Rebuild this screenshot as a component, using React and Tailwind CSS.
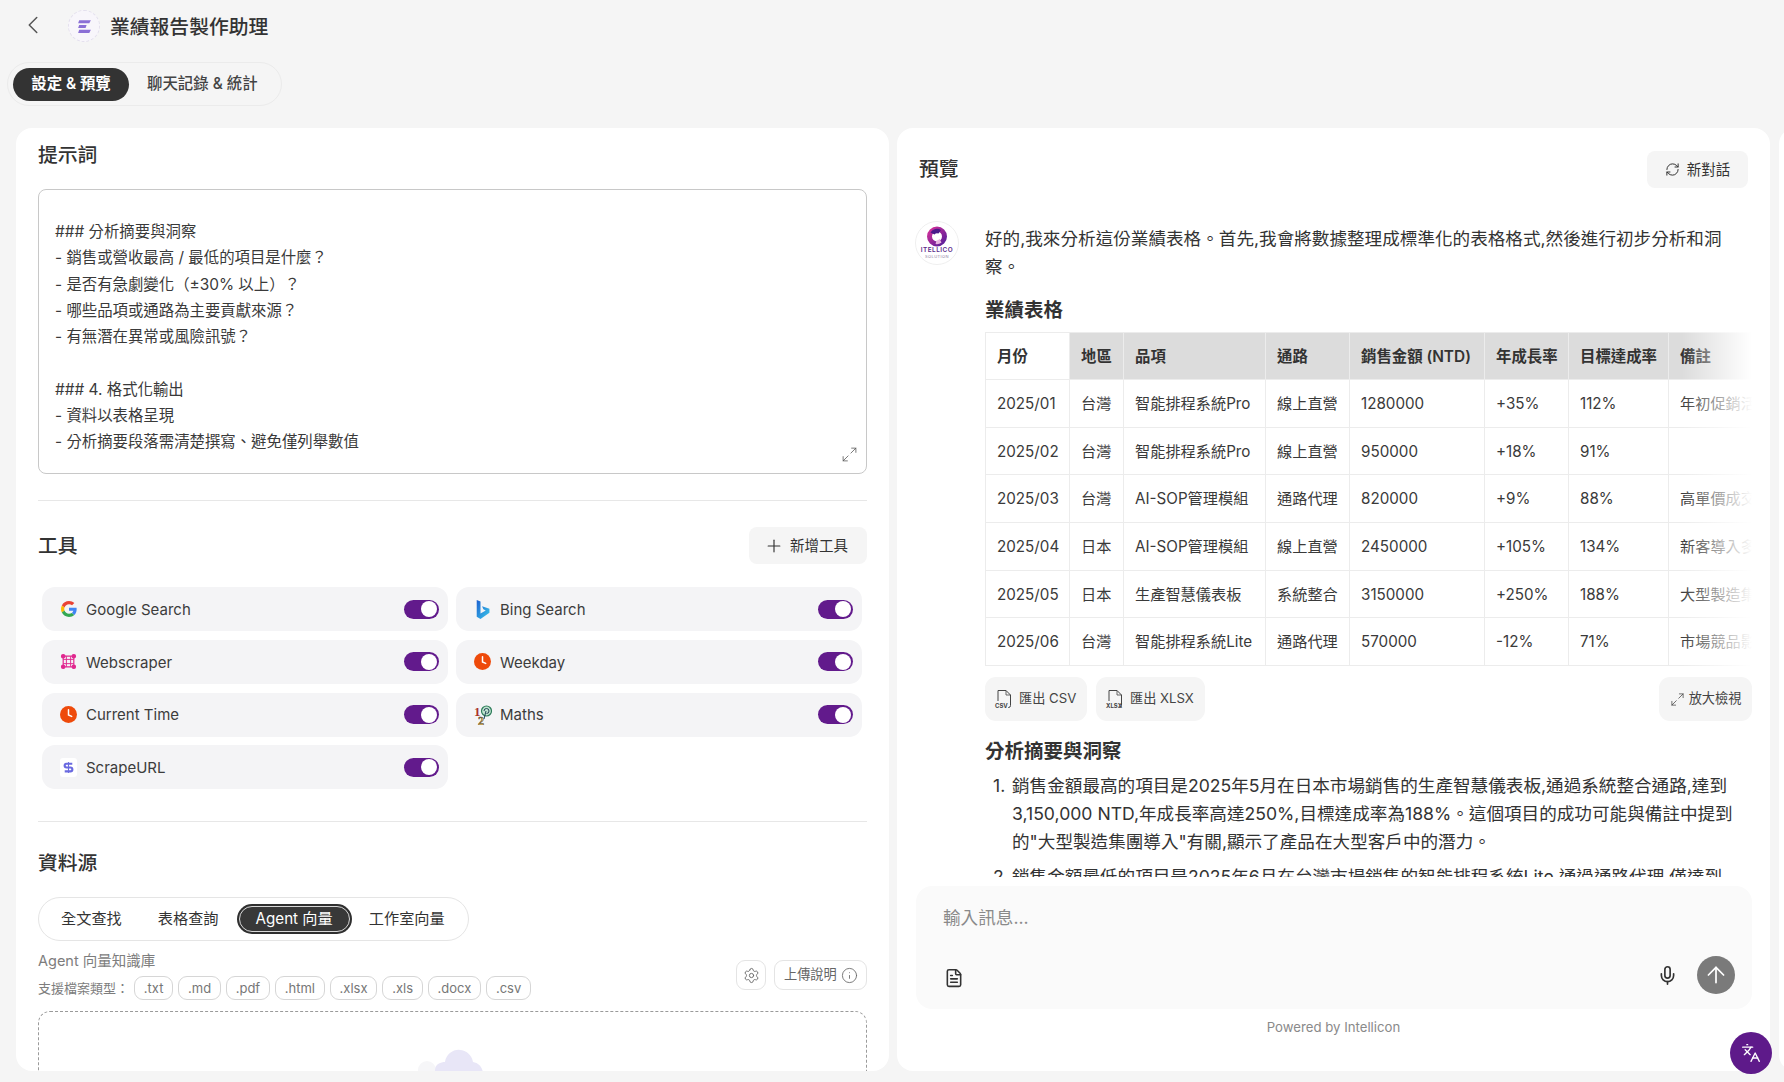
import React from "react";
import { ChevronLeft, Maximize2, Plus, RefreshCw, Settings, Info, Mic, ArrowUp, Languages, FileText } from "lucide-react";

const tools = [
  { name: "Google Search", icon: "google" },
  { name: "Bing Search", icon: "bing" },
  { name: "Webscraper", icon: "web" },
  { name: "Weekday", icon: "clock" },
  { name: "Current Time", icon: "clock" },
  { name: "Maths", icon: "maths" },
  { name: "ScrapeURL", icon: "scrape" },
];

const rows = [
  ["2025/01", "台灣", "智能排程系統Pro", "線上直營", "1280000", "+35%", "112%", "年初促銷活動"],
  ["2025/02", "台灣", "智能排程系統Pro", "線上直營", "950000", "+18%", "91%", ""],
  ["2025/03", "台灣", "AI-SOP管理模組", "通路代理", "820000", "+9%", "88%", "高單價成交"],
  ["2025/04", "日本", "AI-SOP管理模組", "線上直營", "2450000", "+105%", "134%", "新客導入多"],
  ["2025/05", "日本", "生產智慧儀表板", "系統整合", "3150000", "+250%", "188%", "大型製造集團導入"],
  ["2025/06", "台灣", "智能排程系統Lite", "通路代理", "570000", "-12%", "71%", "市場競品影響"],
];

const headers = ["月份", "地區", "品項", "通路", "銷售金額 (NTD)", "年成長率", "目標達成率", "備註"];
const fileTypes = [".txt", ".md", ".pdf", ".html", ".xlsx", ".xls", ".docx", ".csv"];

const ToolIcon = ({ type }) => {
  if (type === "google") {
    return (
      <svg viewBox="0 0 48 48" className="w-[16px] h-[16px]">
        <path fill="#EA4335" d="M24 9.5c3.54 0 6.71 1.22 9.21 3.6l6.85-6.85C35.9 2.38 30.47 0 24 0 14.62 0 6.51 5.38 2.56 13.22l7.98 6.19C12.43 13.72 17.74 9.5 24 9.5z" />
        <path fill="#4285F4" d="M46.98 24.55c0-1.57-.15-3.09-.38-4.55H24v9.02h12.94c-.58 2.96-2.26 5.48-4.78 7.18l7.73 6c4.51-4.18 7.09-10.36 7.09-17.65z" />
        <path fill="#FBBC05" d="M10.53 28.59c-.48-1.45-.76-2.99-.76-4.59s.27-3.14.76-4.59l-7.98-6.19C.92 16.46 0 20.12 0 24c0 3.88.92 7.54 2.56 10.78l7.97-6.19z" />
        <path fill="#34A853" d="M24 48c6.48 0 11.93-2.13 15.89-5.81l-7.73-6c-2.15 1.45-4.92 2.3-8.16 2.3-6.26 0-11.57-4.22-13.47-9.91l-7.98 6.19C6.51 42.62 14.62 48 24 48z" />
      </svg>
    );
  }
  if (type === "bing") {
    return (
      <svg viewBox="0 0 20 20" className="w-[21px] h-[21px] shrink-0">
        <defs>
          <linearGradient id="bingFill" x1="0" y1="0" x2="1" y2="1">
            <stop offset="0" stopColor="#1b5fd0" />
            <stop offset="1" stopColor="#3cc8ea" />
          </linearGradient>
        </defs>
        <path fill="url(#bingFill)" d="M4.5 1l3.6 1.3v11.4l5-2.8-2.3-1.1-1.2-3 7 2.4v3.9L8.1 19l-3.6-2z" />
      </svg>
    );
  }
  if (type === "web") {
    return (
      <svg viewBox="0 0 16 16" className="w-[17px] h-[17px] shrink-0" fill="none" stroke="#e0288f" strokeWidth="1.1">
        <path d="M3 3h10v10H3z" />
        <path d="M6 3v10M10 3v10M3 6h10M3 10h10" strokeWidth="0.9" />
        <circle cx="3" cy="3" r="1.6" fill="#e0288f" />
        <circle cx="13" cy="3" r="1.6" fill="#e0288f" />
        <circle cx="3" cy="13" r="1.6" fill="#e0288f" />
        <circle cx="13" cy="13" r="1.6" fill="#e0288f" />
      </svg>
    );
  }
  if (type === "clock") {
    return (
      <svg viewBox="0 0 16 16" className="w-[17px] h-[17px] shrink-0">
        <circle cx="8" cy="8" r="8" fill="#ee4a0b" />
        <path d="M8 3.6V8.4L11 9.8" fill="none" stroke="#fff" strokeWidth="1.4" strokeLinecap="round" />
      </svg>
    );
  }
  if (type === "maths") {
    return (
      <svg viewBox="0 0 18 20" className="w-[18px] h-[20px] shrink-0">
        <text x="0" y="11" fontSize="13" fontWeight="700" fill="#a8322a" fontFamily="Liberation Serif">1</text>
        <text x="4" y="20" fontSize="12" fontWeight="700" fill="#e8c56a" stroke="#4a3a20" strokeWidth="0.5" fontFamily="Liberation Serif">2</text>
        <circle cx="12.5" cy="6" r="5" fill="#bfe3cf" stroke="#2e7d5b" strokeWidth="1.2" />
        <path d="M10 6a2.5 2.5 0 1 1 2.5 2.5M12 6l-2 8" fill="none" stroke="#245" strokeWidth="1" />
      </svg>
    );
  }
  return (
    <span className="flex items-center justify-center w-[17px] h-[19px] bg-white rounded-[3px]">
      <svg viewBox="0 0 12 12" className="w-[13px] h-[13px]" fill="none" stroke="#6a6ae0" strokeWidth="2">
        <path d="M9.5 2.5H4.2a1.7 1.7 0 0 0 0 3.5h3.6a1.7 1.7 0 0 1 0 3.5H2.5" />
        <path d="M6 1v10" strokeWidth="1" />
      </svg>
    </span>
  );
};

const Toggle = () => (
  <div className="flex items-center justify-end w-[35px] h-[19px] rounded-full bg-[#621a8c] pr-[2px]">
    <div className="w-[16px] h-[16px] rounded-full bg-white" />
  </div>
);

const FileBadgeIcon = ({ label }) => (
  <svg viewBox="0 0 20 22" className="w-[20px] h-[22px]" fill="none">
    <path d="M4 13V2.5h8l4.5 4.5v10.5a2 2 0 0 1-2 2h-.5" stroke="#444" strokeWidth="1" />
    <path d="M12 2.5V7h4.5" stroke="#444" strokeWidth="0.8" />
    <text x="1" y="20" fontSize="6" fontWeight="700" fill="#444" fontFamily="Inter">{label}</text>
  </svg>
);

const LogoMark = () => (
  <svg viewBox="0 0 44 44" className="w-[44px] h-[44px]">
    <defs>
      <linearGradient id="logoRing" x1="0" y1="0" x2="1" y2="1">
        <stop offset="0" stopColor="#d0309a" />
        <stop offset="1" stopColor="#5a1e9a" />
      </linearGradient>
    </defs>
    <circle cx="22" cy="22" r="21.5" fill="#fff" stroke="#efefef" />
    <circle cx="22" cy="15.5" r="7.5" fill="none" stroke="url(#logoRing)" strokeWidth="5" />
    <path d="M15.5 11.5A7.5 7.5 0 0 1 26 9l-2.5 3.6a3.4 3.4 0 0 0-4 .9z" fill="#4a1a8a" />
    <path d="M26.5 21.5a7.5 7.5 0 0 1-6 1.5l1-3.6a3.4 3.4 0 0 0 3-1.6z" fill="#e9b4e0" />
    <text x="22" y="31" textAnchor="middle" fontSize="6.4" fontWeight="600" letterSpacing="0.5" fill="#5a2a8a" fontFamily="Inter">ITELLICO</text>
    <text x="22" y="36.5" textAnchor="middle" fontSize="4" letterSpacing="0.4" fill="#8a7aa0" fontFamily="Inter">SOLUTION</text>
  </svg>
);

export default function App() {
  return (
    <div className="relative h-[1082px] w-full overflow-hidden bg-[#f5f5f5] text-[#333] [font-family:Inter,'Noto_Sans_CJK_TC',sans-serif]">
      {/* top bar */}
      <div className="flex items-center h-[32px] mt-[10px] pl-[18px]">
        <ChevronLeft size={30} strokeWidth={1.2} className="text-[#555] -mt-[3px]" />
        <div className="flex items-center justify-center w-[32px] h-[32px] ml-[20px] rounded-full bg-[#f8f6fb] border border-dashed border-[#e4e0ee]">
          <svg viewBox="0 0 16 14" className="w-[17px] h-[15px]">
            <path d="M3 1h11l-1.5 3H2zM3 5.5h7L9 8.5H2zM3 10h11l-1.5 3H2z" fill="#8b6fd6" />
          </svg>
        </div>
        <h1 className="ml-[10px] text-[19.8px] font-medium leading-[28px] mt-[2px]">業績報告製作助理</h1>
      </div>

      <div className="flex items-center w-[275px] h-[44px] ml-[7px] mt-[20px] px-[5px] gap-[18px] rounded-full border border-[#ebebeb]">
        <span className="flex items-center justify-center w-[116px] h-[33px] rounded-full bg-[#333] text-white text-[15.4px] font-semibold">設定 & 預覽</span>
        <span className="text-[15.4px] font-medium text-[#444]">聊天記錄 & 統計</span>
      </div>

      {/* panels */}
      <div className="flex gap-[8px] pl-[16px] mt-[22px] h-[943px]">
        {/* settings panel */}
        <section className="w-[873px] shrink-0 h-full bg-white rounded-[16px] px-[22px] overflow-hidden">
          <h2 className="text-[19.8px] font-medium leading-[28px] mt-[13px]">提示詞</h2>

          <div className="relative h-[285px] mt-[20px] pt-[29px] pl-[16px] border border-[#c8c8c8] rounded-[8px] text-[15.4px] leading-[26.3px] text-[#3a3a3a] whitespace-pre-line">
            {`### 分析摘要與洞察
- 銷售或營收最高 / 最低的項目是什麼？
- 是否有急劇變化（±30% 以上）？
- 哪些品項或通路為主要貢獻來源？
- 有無潛在異常或風險訊號？

### 4. 格式化輸出
- 資料以表格呈現
- 分析摘要段落需清楚撰寫、避免僅列舉數值`}
            <Maximize2 size={17} strokeWidth={1.1} className="absolute right-[8px] bottom-[10px] text-[#555]" />
          </div>

          <div className="h-px bg-[#e7e7e7] mt-[26px]" />

          <div className="flex items-center justify-between mt-[26px]">
            <h2 className="text-[19.8px] font-medium leading-[28px]">工具</h2>
            <button className="flex items-center gap-[6px] h-[37px] w-[118px] pl-[15px] rounded-[8px] bg-[#f5f5f5] text-[14.5px] text-[#333]">
              <Plus size={20} strokeWidth={1.4} />
              新增工具
            </button>
          </div>

          <div className="grid grid-cols-2 gap-x-[8px] gap-y-[8.8px] mt-[23px] pl-[4px] pr-[5px]">
            {tools.map((tool) => (
              <div key={tool.name} className="flex items-center h-[44px] pl-[17px] pr-[9px] rounded-[13px] bg-[#f4f4f6]">
                <span className="flex items-center justify-center w-[19px] h-[20px] shrink-0">
                  <ToolIcon type={tool.icon} />
                </span>
                <span className="ml-[8px] mt-[2px] text-[15px] text-[#3c3c3c]">{tool.name}</span>
                <div className="ml-auto">
                  <Toggle />
                </div>
              </div>
            ))}
          </div>

          <div className="h-px bg-[#e7e7e7] mt-[32px]" />

          <h2 className="text-[19.8px] font-medium leading-[28px] mt-[27px]">資料源</h2>

          <div className="inline-flex items-center h-[44px] mt-[20px] pl-[4px] pr-[5px] rounded-full border border-[#e5e5e5] text-[15.2px] text-[#333]">
            <span className="px-[18px]">全文查找</span>
            <span className="px-[18px]">表格查詢</span>
            <span className="rounded-full bg-[#2f2f2f] p-[2px]">
              <span className="flex items-center h-[26px] px-[16px] rounded-full border border-[#d8d8d8] bg-[#383838] text-white">Agent 向量</span>
            </span>
            <span className="pl-[17px] pr-[18px]">工作室向量</span>
          </div>

          <div className="flex justify-between mt-[10px]">
            <div>
              <div className="text-[14.5px] leading-[20px] text-[#7d7d7d]">Agent 向量知識庫</div>
              <div className="flex items-center gap-[4px] mt-[5px]">
                <span className="text-[13px] text-[#7d7d7d] w-[92px] whitespace-nowrap">支援檔案類型：</span>
                <div className="flex gap-[5px]">
                  {fileTypes.map((t) => (
                    <span key={t} className="flex items-center h-[24px] px-[8.8px] border border-[#d6d6d6] rounded-[9px] text-[13px] text-[#777]">
                      {t}
                    </span>
                  ))}
                </div>
              </div>
            </div>
            <div className="flex gap-[8px] mt-[9px]">
              <button className="flex items-center justify-center w-[30px] h-[30px] border border-[#e4e4e4] rounded-[9px] text-[#666]">
                <Settings size={17} strokeWidth={1.3} />
              </button>
              <button className="flex items-center gap-[4px] h-[30px] w-[93px] pl-[9px] border border-[#e4e4e4] rounded-[9px] text-[13.2px] text-[#666]">
                上傳說明
                <Info size={17} strokeWidth={1.2} />
              </button>
            </div>
          </div>

          <div className="flex justify-center h-[90px] mt-[11px] pt-[32px] border border-dashed border-[#9a9a9a] rounded-[12px]">
            <svg viewBox="0 0 76 44" className="w-[76px] h-[44px]">
              <circle cx="12" cy="26" r="9" fill="#f6f6f8" />
              <path d="M20 44V26c0-6 6-8 10-8 1-8 9-13 15-12 6 0 12 5 13 12 6 1 10 6 10 12v14z" fill="#e8e6f7" />
              <path d="M39 36l6 7H33z" fill="#5b4bc4" />
            </svg>
          </div>
        </section>

        {/* preview panel */}
        <section className="flex flex-col w-[873px] shrink-0 h-full bg-white rounded-[16px] overflow-hidden">
          <div className="flex items-center justify-between mt-[23px] pl-[22px] pr-[22px]">
            <h2 className="text-[19.8px] font-medium leading-[28px] -mt-[2px]">預覽</h2>
            <button className="flex items-center justify-center gap-[7px] w-[101px] h-[37px] rounded-[8px] bg-[#f5f5f5] text-[14.5px] text-[#333]">
              <RefreshCw size={15} strokeWidth={1.6} />
              新對話
            </button>
          </div>

          <div className="flex flex-1 min-h-0 mt-[33px] mb-[9px] pl-[18px] pr-[18px] overflow-hidden">
            <div className="shrink-0">
              <LogoMark />
            </div>
            <div className="ml-[26px] mt-[4px] min-w-0 flex-1">
              <p className="text-[17.6px] leading-[28px] pr-[20px]">好的,我來分析這份業績表格。首先,我會將數據整理成標準化的表格格式,然後進行初步分析和洞察。</p>
              <h3 className="text-[19.5px] font-semibold leading-[28px] mt-[15px]">業績表格</h3>

              <div className="relative mt-[8px] overflow-hidden">
                <table className="table-fixed border-collapse w-[804px] text-[15.2px] text-left">
                  <thead>
                    <tr className="h-[47px] text-[15.4px]">
                      {headers.map((h, i) => (
                        <th
                          key={h}
                          className={
                            (i === 0 ? "w-[84px] bg-white " : "bg-[#dcdcdc] ") +
                            (i === 1 ? "w-[54px] " : "") +
                            (i === 2 ? "w-[142px] " : "") +
                            (i === 3 ? "w-[84px] " : "") +
                            (i === 4 ? "w-[135px] " : "") +
                            (i === 5 ? "w-[84px] " : "") +
                            (i === 6 ? "w-[100px] " : "") +
                            "px-[11px] pt-[2px] font-semibold border border-[#ececec] whitespace-nowrap"
                          }
                        >
                          {h}
                        </th>
                      ))}
                    </tr>
                  </thead>
                  <tbody>
                    {rows.map((r) => (
                      <tr key={r[0]} className="h-[47.7px]">
                        {r.map((c, i) => (
                          <td key={i} className="px-[11px] pt-[2px] border border-[#ececec] whitespace-nowrap overflow-hidden text-[#3a3a3a]">
                            {c}
                          </td>
                        ))}
                      </tr>
                    ))}
                  </tbody>
                </table>
                <div className="absolute top-0 right-0 bottom-0 w-[70px] bg-gradient-to-r from-transparent to-white" />
              </div>

              <div className="flex items-center justify-between mt-[11px]">
                <div className="flex gap-[9px]">
                  <button className="flex items-center gap-[5px] h-[44px] w-[102px] pl-[9px] rounded-[11px] bg-[#f5f5f5] text-[13.2px] text-[#444]">
                    <FileBadgeIcon label="CSV" />
                    匯出 CSV
                  </button>
                  <button className="flex items-center gap-[5px] h-[44px] w-[109px] pl-[9px] rounded-[11px] bg-[#f5f5f5] text-[13.2px] text-[#444]">
                    <FileBadgeIcon label="XLSX" />
                    匯出 XLSX
                  </button>
                </div>
                <button className="flex items-center justify-center gap-[4px] h-[44px] w-[93px] rounded-[11px] bg-[#f5f5f5] text-[13.2px] text-[#444]">
                  <Maximize2 size={15} strokeWidth={1.2} />
                  放大檢視
                </button>
              </div>

              <h3 className="text-[19.5px] font-semibold leading-[28px] mt-[16px]">分析摘要與洞察</h3>
              <ol className="mt-[7px] text-[17.6px] leading-[28px]">
                <li className="flex">
                  <span className="w-[27px] shrink-0 pl-[8px]">1.</span>
                  <span className="pr-[16px]">銷售金額最高的項目是2025年5月在日本市場銷售的生產智慧儀表板,通過系統整合通路,達到3,150,000 NTD,年成長率高達250%,目標達成率為188%。這個項目的成功可能與備註中提到的"大型製造集團導入"有關,顯示了產品在大型客戶中的潛力。</span>
                </li>
                <li className="flex mt-[7px]">
                  <span className="w-[27px] shrink-0 pl-[8px]">2.</span>
                  <span className="pr-[16px]">銷售金額最低的項目是2025年6月在台灣市場銷售的智能排程系統Lite,通過通路代理,僅達到570,000 NTD。</span>
                </li>
              </ol>
            </div>
          </div>

          {/* chat input */}
          <div className="flex flex-col justify-between h-[123px] shrink-0 ml-[19px] mr-[18px] pt-[21px] pb-[15px] pl-[27px] pr-[17px] rounded-[16px] bg-[#fafafa]">
            <div className="text-[17.6px] leading-[22px] text-[#8a8a8a]">輸入訊息...</div>
            <div className="flex items-center">
              <FileText size={20} strokeWidth={1.9} className="text-[#333] mt-[5px] ml-[1px]" />
              <Mic size={21} strokeWidth={1.9} className="ml-auto text-[#333]" />
              <button className="flex items-center justify-center w-[38px] h-[38px] ml-[19px] rounded-full bg-[#7a7a7a] text-white">
                <ArrowUp size={26} strokeWidth={1.6} />
              </button>
            </div>
          </div>

          <div className="text-center text-[13.2px] leading-[18px] text-[#8a8a8a] mt-[9px] mb-[35px]">Powered by Intellicon</div>
        </section>

        {/* next panel, only its edge is on screen */}
        <div className="w-[40px] shrink-0 ml-[1px] h-full bg-white rounded-[16px]" />
      </div>

      <button className="fixed right-[12px] bottom-[8px] flex items-center justify-center w-[42px] h-[42px] rounded-full bg-[#5e1a8a] text-white">
        <Languages size={20} strokeWidth={1.6} />
      </button>
    </div>
  );
}
